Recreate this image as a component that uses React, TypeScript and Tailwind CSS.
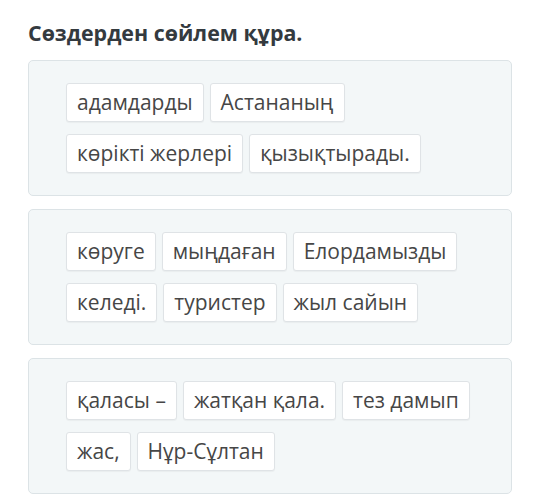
const SENTENCES: string[][] = [
  ['адамдарды', 'Астананың', 'көрікті жерлері', 'қызықтырады.'],
  ['көруге', 'мыңдаған', 'Елордамызды', 'келеді.', 'туристер', 'жыл сайын'],
  ['қаласы –', 'жатқан қала.', 'тез дамып', 'жас,', 'Нұр-Сұлтан'],
];

function WordChip({ word }: { word: string }) {
  return (
    <span className="flex h-[39px] items-center rounded-[3px] border border-[#dfe3e6] bg-white px-[10px] text-[21px] leading-none text-[#464646] shadow-[0_1px_1px_rgba(0,0,0,0.04)]">
      {word}
    </span>
  );
}

export default function App() {
  return (
    <div className="min-h-[496px] w-[540px] bg-white pl-[28px] pt-[19px] font-['Open_Sans',sans-serif]">
      <h2 className="mb-[13px] text-[21.4px] font-bold leading-[28px] text-[#343a3f]">
        Сөздерден сөйлем құра.
      </h2>
      <div className="flex w-[484px] flex-col gap-[13px]">
        {SENTENCES.map((words, i) => (
          <div
            key={i}
            className="flex flex-wrap gap-x-[6px] gap-y-[12px] rounded-[5px] border border-[#dce3e6] bg-[#f3f7f8] px-[37px] py-[22px]"
          >
            {words.map(w => (
              <WordChip key={w} word={w} />
            ))}
          </div>
        ))}
      </div>
    </div>
  );
}
